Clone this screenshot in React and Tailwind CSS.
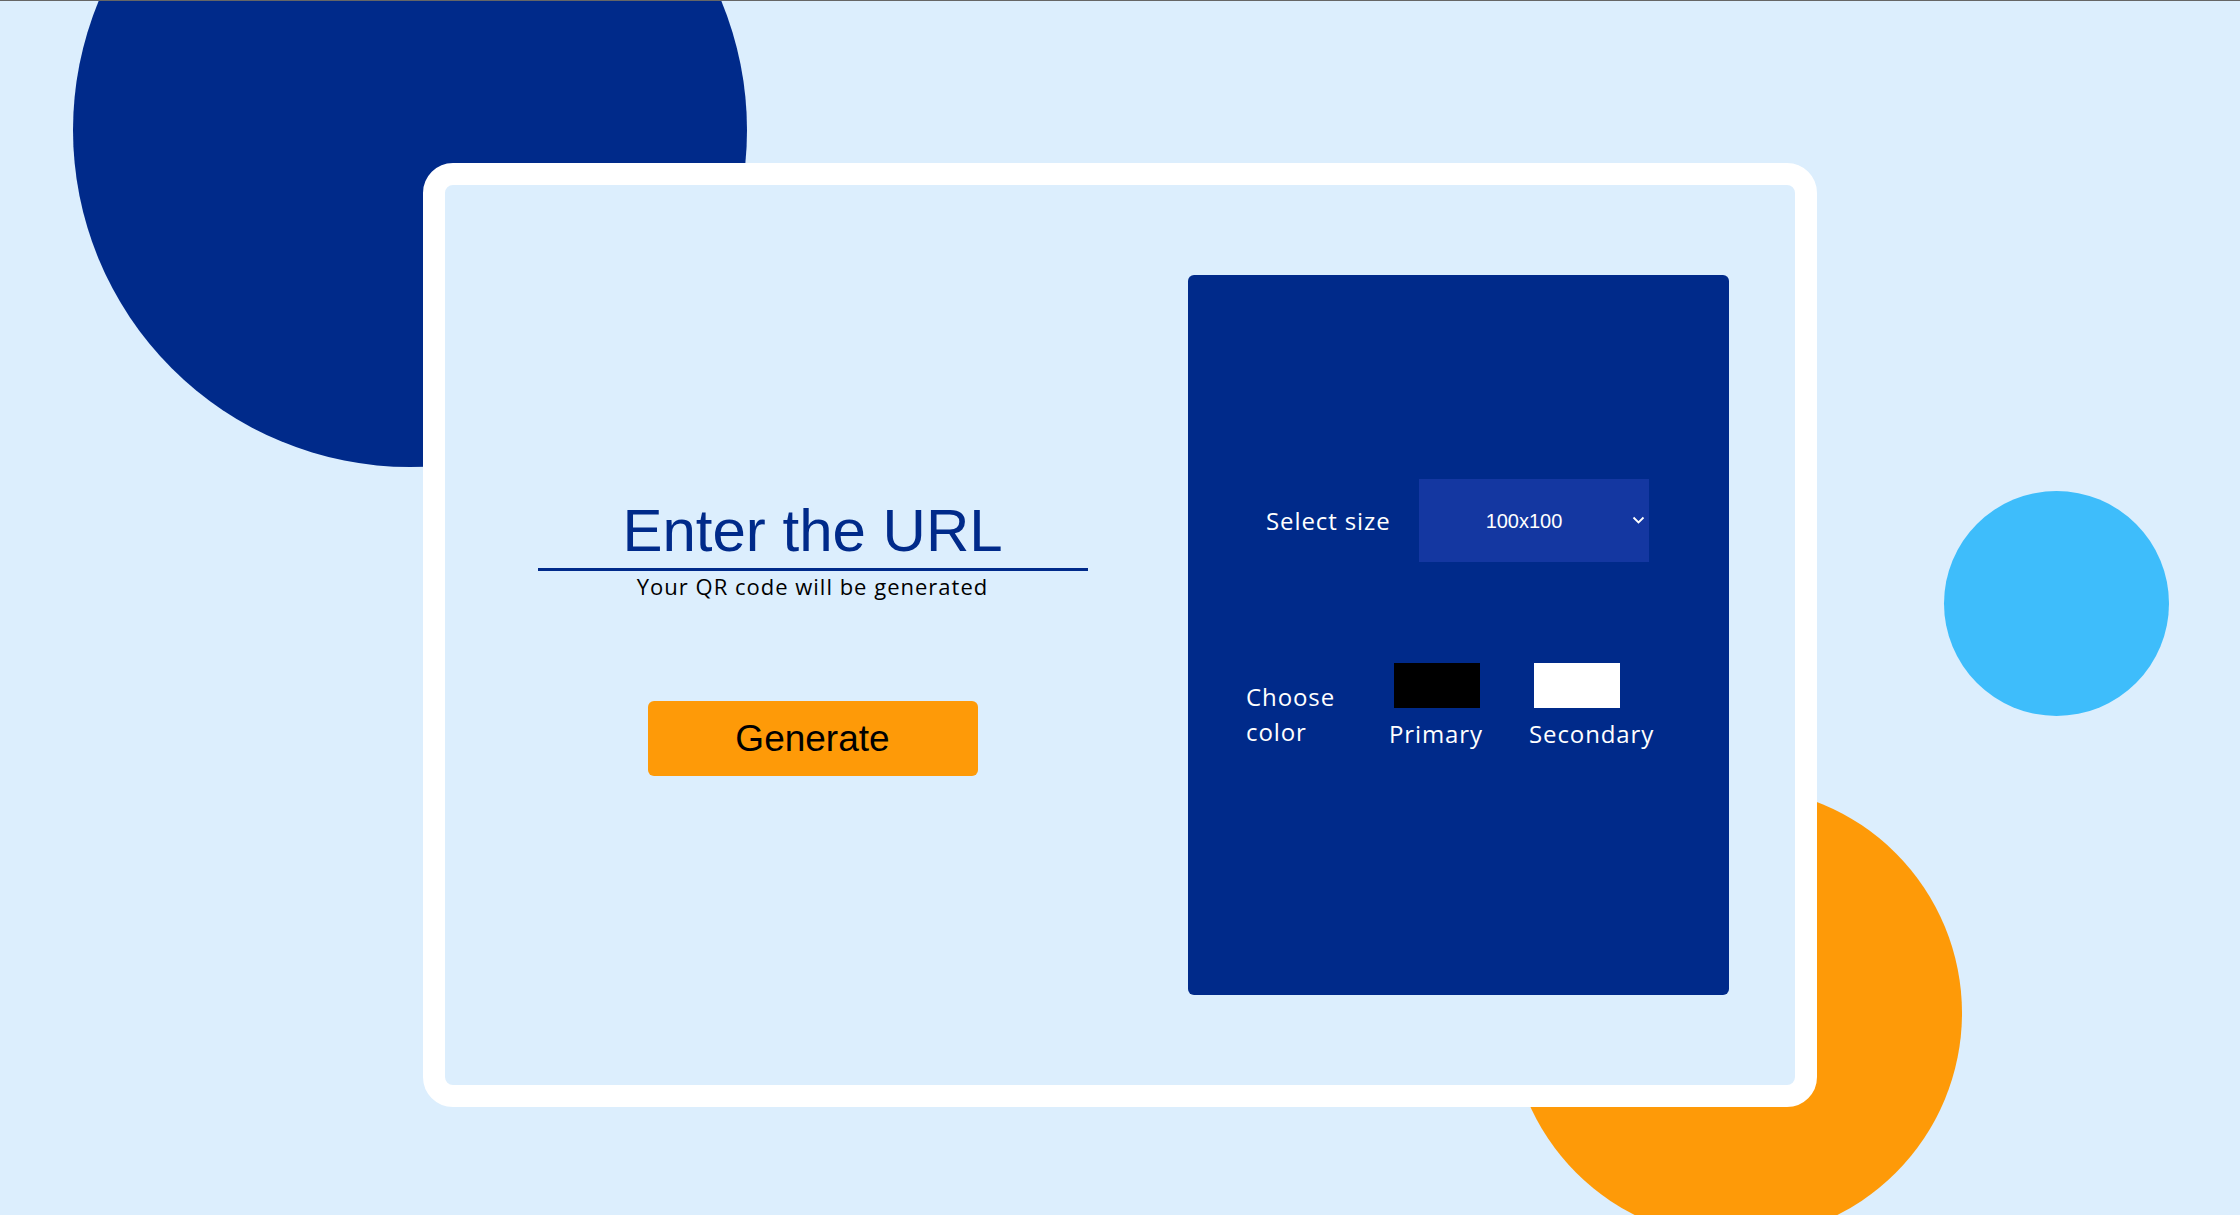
import React from "react";

export default function App() {
  const poppins = { fontFamily: '"Open Sans", "Noto Sans", sans-serif' };
  const arial = { fontFamily: '"Liberation Sans", Arial, sans-serif' };
  return (
    <div className="relative w-full h-[1215px] overflow-hidden bg-[#dceefd] border-t border-[#666666]">
      {/* decorative circles */}
      <div className="absolute left-[73px] top-[-208px] w-[674px] h-[674px] rounded-full bg-[#002a8a]" />
      <div className="absolute left-[1944px] top-[490px] w-[225px] h-[225px] rounded-full bg-[#3ebdfb]" />
      <div className="absolute left-[1510px] top-[786px] w-[452px] h-[452px] rounded-full bg-[#fe9a08]" />

      {/* card */}
      <div className="relative z-10 mx-auto mt-[162px] w-[1394px] h-[944px] rounded-[30px] border-[22px] border-white bg-[#dceefd] flex items-center">
        {/* left column */}
        <div className="w-[735px] h-full flex flex-col items-center justify-center pt-[2px]">
          <div
            className="w-[550px] text-center text-[60px] leading-[69px] text-[#002a8a] pb-[3px] border-b-[3px] border-[#002a8a]"
            style={arial}
          >
            Enter the URL
          </div>
          <div className="text-[22px] leading-[30px] tracking-[1px] text-black" style={poppins}>
            Your QR code will be generated
          </div>
          <button
            className="mt-[100px] w-[330px] h-[75px] rounded-[6px] bg-[#fe9a08] text-black text-[37px] leading-none"
            style={arial}
          >
            Generate
          </button>
        </div>

        {/* right panel */}
        <div className="ml-[8px] w-[541px] h-[720px] rounded-[6px] bg-[#002a8a] flex flex-col pt-[204px] text-white" style={poppins}>
          <div className="flex items-center pl-[78px]">
            <span className="w-[153px] text-[24px] leading-[35px] tracking-[0.9px]">Select size</span>
            <div className="relative w-[230px] h-[83px] bg-[#1437a1] flex items-center justify-center pr-[20px]">
              <span className="text-[20px] leading-none" style={arial}>100x100</span>
              <svg
                className="absolute left-[213px] top-[37px]"
                width="13"
                height="9"
                viewBox="0 0 13 9"
                fill="none"
              >
                <polyline points="1.5,1.5 6.5,6.5 11.5,1.5" stroke="white" strokeWidth="1.8" />
              </svg>
            </div>
          </div>

          <div className="flex items-end pl-[58px] mt-[101px]">
            <div className="w-[143px] text-[24px] leading-[35px] tracking-[0.9px] pb-[2px]">
              Choose
              <br />
              color
            </div>
            <div className="w-[140px] flex flex-col items-start">
              <div className="ml-[5px] w-[86px] h-[45px] bg-black" />
              <span className="mt-[8px] text-[24px] leading-[35px] tracking-[0.9px]">Primary</span>
            </div>
            <div className="flex flex-col items-start">
              <div className="ml-[5px] w-[86px] h-[45px] bg-white" />
              <span className="mt-[8px] text-[24px] leading-[35px] tracking-[0.9px]">Secondary</span>
            </div>
          </div>
        </div>
      </div>
    </div>
  );
}
